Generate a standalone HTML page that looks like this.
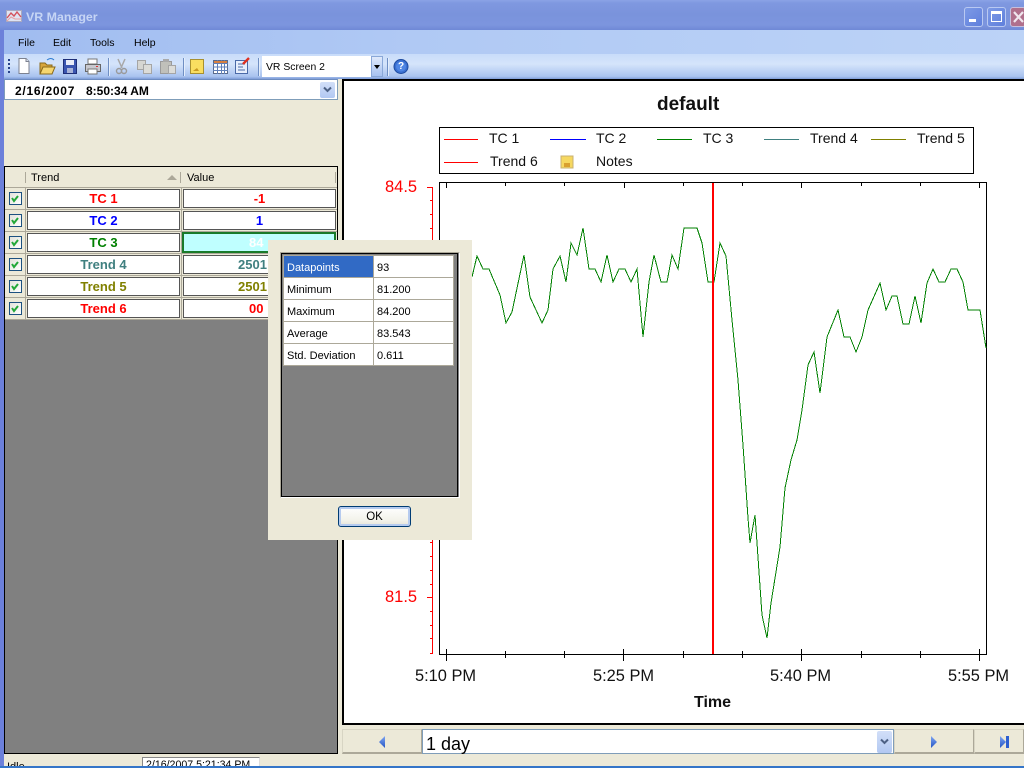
<!DOCTYPE html>
<html><head><meta charset="utf-8"><title>VR Manager</title>
<style>
html,body{margin:0;padding:0;width:1024px;height:768px;overflow:hidden;background:#ECE9D8}
*{box-sizing:border-box}
body{font-family:"Liberation Sans",sans-serif;position:relative;color:#000}
.a{position:absolute;white-space:pre}
.m{font-size:10.5px;top:37px;color:#000}
.c{position:absolute;background:#fff;border:1px solid #555;height:19px;font-weight:bold;font-size:13px;line-height:17px;text-align:center;white-space:pre}
.ck{position:absolute;left:9px;width:13px;height:13px;background:linear-gradient(135deg,#e2e2da,#fff);border:1px solid #1C5180}
.hl{position:absolute;background:#ACA899}
.dt{position:absolute;font-size:11px;line-height:24px;height:21px;overflow:hidden;padding-left:3px;white-space:pre;background:#fff}
.ax{position:absolute;font-size:16.4px;line-height:18px;color:#111;white-space:pre}
.lg{position:absolute;font-size:14px;line-height:16px;color:#111;white-space:pre}
.sep{position:absolute;top:58px;width:1px;height:18px;background:#6f8fc4;box-shadow:1px 0 0 #e4eefc}
.b{position:absolute;top:729px;height:25px;background:#ECE9D8;border:1px solid #ACA899;border-top-color:#d8d5c4;border-left-color:#d8d5c4;border-bottom:2px solid #ACA899}
</style></head><body>

<!-- title bar -->
<div class="a" style="left:0;top:0;width:1024px;height:30px;background:linear-gradient(#8ba3e6 0,#7f98e0 3px,#7a93dc 14px,#7c95de 25px,#6f88d6 30px)"></div>
<svg class="a" style="left:6px;top:9px" width="17" height="14" viewBox="0 0 17 14">
<rect x="0.5" y="1.5" width="15" height="11" fill="#dfe4f2" stroke="#a9a9c0"/>
<path d="M1 9L5 4L8 7L11 3L15 8" fill="none" stroke="#d4505a" stroke-width="1.4"/>
<path d="M1 12L5 8L9 10L15 10" fill="none" stroke="#e8a0a0"/>
</svg>
<div class="a" style="left:26px;top:10px;font-weight:bold;font-size:12.4px;line-height:15px;color:#c6d5f5">VR Manager</div>
<div class="a" style="left:964px;top:7px;width:19px;height:20px;border:1px solid #b9c9f2;border-radius:3px;background:linear-gradient(135deg,#7d9ae6,#5f7fdc)"><div class="a" style="left:4px;top:11px;width:7px;height:3px;background:#fff"></div></div>
<div class="a" style="left:987px;top:7px;width:19px;height:20px;border:1px solid #b9c9f2;border-radius:3px;background:linear-gradient(135deg,#7d9ae6,#5f7fdc)"><div class="a" style="left:3px;top:3px;width:11px;height:11px;border:1px solid #fff;border-top-width:3px"></div></div>
<div class="a" style="left:1010px;top:7px;width:16px;height:20px;border:1px solid #c7bfdc;border-radius:3px;background:#b0708c"></div>
<svg class="a" style="left:1013px;top:11px" width="11" height="12" viewBox="0 0 11 12"><path d="M1 1L10 11M10 1L1 11" stroke="#f0e6ee" stroke-width="2.2"/></svg>

<!-- menu -->
<div class="a" style="left:0;top:30px;width:1024px;height:24px;background:linear-gradient(90deg,#a0bcf0,#b0c9f4 40%,#bcd3f7)"></div>
<div class="a m" style="left:18px">File</div>
<div class="a m" style="left:53px">Edit</div>
<div class="a m" style="left:90px">Tools</div>
<div class="a m" style="left:134px">Help</div>

<!-- toolbar -->
<div class="a" style="left:0;top:54px;width:1024px;height:25px;background:linear-gradient(#c8dcfa,#d5e4fb 40%,#a9c3ef 90%,#7f9cd8)"></div>
<div class="a" style="left:8px;top:59px;width:2px;height:15px;background:repeating-linear-gradient(#27418a 0 2px,transparent 2px 4px)"></div>
<svg class="a" style="left:0;top:54px" width="420" height="25" viewBox="0 0 420 25">
<!-- new -->
<path d="M19 4.5h7l3 3v12h-10z" fill="#fff" stroke="#7d8290"/><path d="M26 4.5v3h3" fill="#dfe4ee" stroke="#7d8290"/>
<!-- open -->
<path d="M40 9h5l2 2h5v9H40z" fill="#d8a53c" stroke="#8a6a1c"/><path d="M40 20l3-7h12l-3 7z" fill="#f6d670" stroke="#8a6a1c"/><path d="M47 6q4-3 7 0" fill="none" stroke="#2a7ad0"/>
<!-- save -->
<rect x="63.5" y="5.5" width="13" height="14" fill="#3a55b0" stroke="#1e2f78"/><rect x="66" y="6" width="8" height="5" fill="#e8ecf8"/><rect x="67" y="14" width="6" height="5" fill="#a9b4d8"/>
<!-- print -->
<path d="M88 5h9v5h-9z" fill="#fff" stroke="#777"/><path d="M85.5 10.5h15v7h-15z" fill="#c9c9cf" stroke="#666"/><path d="M88 15h9v5h-9z" fill="#fff" stroke="#777"/><rect x="96" y="12" width="2" height="1" fill="#d33"/>
<!-- cut -->
<path d="M118 5l4 9M125 5l-4 9" stroke="#a8a8a8" stroke-width="1.5" fill="none"/><circle cx="119" cy="17" r="2.5" fill="none" stroke="#9a9a9a" stroke-width="1.4"/><circle cx="124" cy="17" r="2.5" fill="none" stroke="#9a9a9a" stroke-width="1.4"/>
<!-- copy -->
<rect x="137.5" y="6.5" width="8" height="9" fill="#d6d6d2" stroke="#a5a5a5"/><rect x="143.5" y="10.5" width="8" height="9" fill="#dcdcd8" stroke="#a5a5a5"/>
<!-- paste -->
<rect x="160.5" y="7.5" width="11" height="12" fill="#c0c0ba" stroke="#9a9a9a"/><rect x="163" y="5" width="6" height="3" fill="#aaa"/><rect x="168.5" y="11.5" width="7" height="8" fill="#dcdcd8" stroke="#a5a5a5"/>
<!-- note -->
<rect x="190.5" y="5.5" width="13" height="14" fill="#f9de60" stroke="#a89030"/><path d="M193 17l4-3 2 3z" fill="#c89a20"/>
<!-- grid -->
<rect x="213.5" y="6.5" width="14" height="13" fill="#fff" stroke="#5a6a8a"/><path d="M213 9.5h15M213 13h15M213 16.5h15M217.500 6v14M221.500 6v14M224.500 6v14" stroke="#5f7fb8" stroke-width="1"/><rect x="214" y="7" width="13" height="2" fill="#d88040"/>
<!-- edit -->
<rect x="235.500" y="6.500" width="12" height="13" fill="#e6eefc" stroke="#4a6aa8"/><path d="M238 10h7M238 13h5M238 16h7" stroke="#4a6aa8"/><path d="M243 10l6-6" stroke="#e03020" stroke-width="2.4"/>
<!-- help -->
<circle cx="401" cy="12.500" r="7" fill="#3a6fd0" stroke="#1c4aa0"/><circle cx="401" cy="12.500" r="5" fill="#4f86e4"/>
</svg>
<div class="a" style="left:400px;top:60px;font-weight:bold;font-size:10px;line-height:13px;color:#fff;transform:translateX(-2px)">?</div>
<div class="sep" style="left:108px"></div><div class="sep" style="left:183px"></div><div class="sep" style="left:258px"></div><div class="sep" style="left:387px"></div>
<div class="a" style="left:262px;top:56px;width:121px;height:21px;background:#fff"></div>
<div class="a" style="left:266px;top:61px;font-size:10.4px;line-height:14px">VR Screen 2</div>
<div class="a" style="left:371px;top:56px;width:12px;height:21px;background:linear-gradient(#dfe9fb,#a8c2f0);border:1px solid #8aa8d8"></div>
<div class="a" style="left:374px;top:65px;width:0;height:0;border:3px solid transparent;border-top:4px solid #000;border-bottom:0"></div>

<!-- left border -->
<div class="a" style="left:0;top:30px;width:4px;height:736px;background:#6c80da"></div>

<!-- date combo -->
<div class="a" style="left:4px;top:79px;width:334px;height:21px;background:#fff;border:1px solid #7F9DB9;border-top:1px solid #6d8cc0"></div>
<div class="a" style="left:15px;top:84px;font-weight:bold;font-size:12px;line-height:14px;letter-spacing:.75px">2/16/2007</div>
<div class="a" style="left:86px;top:84px;font-weight:bold;font-size:12px;line-height:14px">8:50:34 AM</div>
<div class="a" style="left:320px;top:82px;width:15px;height:16px;border-radius:2px;background:linear-gradient(#d2dff8,#b2c8f2)"></div>
<svg class="a" style="left:322px;top:86px" width="11" height="8" viewBox="0 0 11 8"><path d="M2 1.500L5.500 5L9 1.500" fill="none" stroke="#4d6185" stroke-width="2"/></svg>

<!-- grid -->
<div class="a" style="left:4px;top:166px;width:334px;height:588px;background:#808080;border:1px solid #000"></div>
<div class="a" style="left:5px;top:167px;width:332px;height:152px;background:#ECE9D8"></div>
<div class="a" style="left:5px;top:187px;width:332px;height:1px;background:#ACA899"></div>
<div class="a" style="left:25px;top:172px;width:1px;height:11px;background:#ACA899"></div>
<div class="a" style="left:180px;top:172px;width:1px;height:11px;background:#ACA899"></div>
<div class="a" style="left:335px;top:172px;width:1px;height:11px;background:#ACA899"></div>
<div class="a" style="left:31px;top:171px;font-size:11px;line-height:14px">Trend</div>
<div class="a" style="left:187px;top:171px;font-size:11px;line-height:14px">Value</div>
<div class="a" style="left:167px;top:175px;width:0;height:0;border:5px solid transparent;border-bottom:5px solid #ACA899;border-top:0"></div>
<div class="hl" style="left:5px;top:209px;width:332px;height:1px"></div>
<div class="hl" style="left:5px;top:231px;width:332px;height:1px"></div>
<div class="hl" style="left:5px;top:253px;width:332px;height:1px"></div>
<div class="hl" style="left:5px;top:275px;width:332px;height:1px"></div>
<div class="hl" style="left:5px;top:297px;width:332px;height:1px"></div>
<div class="hl" style="left:5px;top:319px;width:332px;height:1px"></div>
<div class="hl" style="left:25px;top:188px;width:1px;height:131px"></div>
<div class="hl" style="left:181px;top:188px;width:1px;height:131px"></div>

<div class="c" style="left:27px;top:189px;width:153px;color:#f00">TC 1</div>
<div class="c" style="left:183px;top:189px;width:153px;color:#f00">-1</div>
<div class="c" style="left:27px;top:211px;width:153px;color:#00f">TC 2</div>
<div class="c" style="left:183px;top:211px;width:153px;color:#00f">1</div>
<div class="c" style="left:27px;top:233px;width:153px;color:#008000">TC 3</div>
<div class="c" style="left:182px;top:232px;width:154px;height:21px;background:#BFFFFF;border:2px solid #1a7a2a;color:#fff;text-align:left;padding-left:65px">84</div>
<div class="c" style="left:27px;top:255px;width:153px;color:#408080">Trend 4</div>
<div class="c" style="left:183px;top:255px;width:153px;color:#408080;text-align:left;padding-left:54px">2501</div>
<div class="c" style="left:27px;top:277px;width:153px;color:#808000">Trend 5</div>
<div class="c" style="left:183px;top:277px;width:153px;color:#808000;text-align:left;padding-left:54px">2501</div>
<div class="c" style="left:27px;top:299px;width:153px;color:#f00">Trend 6</div>
<div class="c" style="left:183px;top:299px;width:153px;color:#f00;text-align:left;padding-left:65px">00</div>

<div class="ck" style="top:192px"></div><div class="ck" style="top:214px"></div><div class="ck" style="top:236px"></div><div class="ck" style="top:258px"></div><div class="ck" style="top:280px"></div><div class="ck" style="top:302px"></div>
<svg class="a" style="left:0;top:0" width="30" height="320" viewBox="0 0 30 320">
<g fill="none" stroke="#22a838" stroke-width="2">
<path d="M12 198l2 3l4-5"/><path d="M12 220l2 3l4-5"/><path d="M12 242l2 3l4-5"/><path d="M12 264l2 3l4-5"/><path d="M12 286l2 3l4-5"/><path d="M12 308l2 3l4-5"/>
</g></svg>

<!-- chart panel -->
<div class="a" style="left:342px;top:79px;width:690px;height:646px;background:#fff;border:2px solid #000"></div>
<div class="a" style="left:657px;top:94px;font-weight:bold;font-size:19px;line-height:22px;color:#111">default</div>

<svg class="a" style="left:0;top:0" width="1024" height="768" viewBox="0 0 1024 768" shape-rendering="crispEdges">
<rect x="439.500" y="127.500" width="534" height="46" fill="#fff" stroke="#000"/>
<path d="M444 139.500h34M444 162.500h34" stroke="#f00"/><path d="M550 139.500h36" stroke="#00f"/><path d="M657 139.500h35" stroke="#008000"/><path d="M764 139.500h35" stroke="#408080"/><path d="M871 139.500h35" stroke="#808000"/>
<rect x="561" y="156" width="12" height="12" fill="#f6d860" stroke="#c8b070"/><rect x="564" y="163" width="6" height="4" fill="#d9a030"/>
<rect x="439.500" y="182.500" width="547" height="472" fill="#fff" stroke="#000"/>
<path d="M446.500 183v5M505.500 183v3M564.500 183v3M624.500 183v5M683.500 183v3M742.500 183v3M801.500 183v5M861.500 183v3M920.500 183v3M979.500 183v5" stroke="#000"/>
<path d="M446.500 649v12M623.500 649v12M801.500 649v12M979.500 649v12M505.500 651v7M564.500 651v7M683.500 651v7M742.500 651v7M861.500 651v7M920.500 651v7" stroke="#000"/>
<path d="M432.500 187v466" stroke="#f00"/>
<path d="M427 187.500h6M430 200.500h3M430 214.500h3M430 228.500h3M430 542.500h3M430 556.500h3M430 570.500h3M430 584.500h3M427 597.500h6M430 611.500h3M430 625.500h3M430 638.500h3M430 653.500h3" stroke="#f00"/>
<polyline fill="none" stroke="#008000" stroke-width="1" shape-rendering="crispEdges" points="472,277 477,256 483,269 489,269 500,295 506,323 512,312 524,255 530,297 542,323 548,310 553,269 560,256 566,282 571,243 577,255 583,228 589,269 595,269 601,282 607,255 613,282 619,269 625,269 631,282 637,269 643,337 649,282 654,255 661,282 667,282 672,255 678,269 684,228 697,228 702,243 708,282 714,282 720,243 726,256 732,320 738,380 743,445 748,518 750,543 755,515 757,543 762,615 767,638 771,603 780,547 785,488 791,460 797,440 802,410 808,365 814,352 820,393 827,337 838,310 844,337 850,337 856,352 862,337 868,310 880,283 886,310 892,296 897,296 903,324 909,324 915,296 921,323 927,283 933,269 939,282 945,282 951,269 957,269 963,282 968,310 980,310 986,348"/>
<rect x="712" y="183" width="2" height="471" fill="#f00"/>
</svg>

<div class="lg" style="left:489px;top:130px">TC 1</div>
<div class="lg" style="left:596px;top:130px">TC 2</div>
<div class="lg" style="left:703px;top:130px">TC 3</div>
<div class="lg" style="left:810px;top:130px">Trend 4</div>
<div class="lg" style="left:917px;top:130px">Trend 5</div>
<div class="lg" style="left:490px;top:153px">Trend 6</div>
<div class="lg" style="left:596px;top:153px">Notes</div>

<div class="ax" style="left:385px;top:178px;color:#f00;font-size:16.500px">84.5</div>
<div class="ax" style="left:385px;top:588px;color:#f00;font-size:16.500px">81.5</div>
<div class="ax" style="left:415px;top:667px">5:10 PM</div>
<div class="ax" style="left:593px;top:667px">5:25 PM</div>
<div class="ax" style="left:770px;top:667px">5:40 PM</div>
<div class="ax" style="left:948px;top:667px">5:55 PM</div>
<div class="ax" style="left:694px;top:694px;font-weight:bold;font-size:16px">Time</div>

<!-- bottom controls -->
<div class="b" style="left:342px;width:80px"></div>
<div class="b" style="left:894px;width:80px"></div>
<div class="b" style="left:974px;width:50px"></div>
<div class="a" style="left:422px;top:729px;width:472px;height:25px;background:#fff;border:1px solid #7F9DB9"></div>
<div class="a" style="left:426px;top:734px;font-size:18px;line-height:21px">1 day</div>
<div class="a" style="left:877px;top:731px;width:15px;height:22px;border-radius:2px;background:linear-gradient(#d2dff8,#b2c8f2)"></div>
<svg class="a" style="left:879px;top:738px" width="11" height="8" viewBox="0 0 11 8"><path d="M2 1.500L5.500 5L9 1.500" fill="none" stroke="#4d6185" stroke-width="2"/></svg>
<svg class="a" style="left:0;top:730px" width="1024" height="24" viewBox="0 0 1024 24">
<defs><linearGradient id="g" x1="0" x2="0" y1="0" y2="1"><stop offset="0" stop-color="#7fa6f2"/><stop offset="1" stop-color="#2455c4"/></linearGradient></defs>
<path d="M385 6v12l-6-6z" fill="url(#g)"/>
<path d="M931 6v12l6-6z" fill="url(#g)"/>
<path d="M1000 6v12l6-6z" fill="url(#g)"/><rect x="1006" y="6" width="3" height="12" fill="#2d5fd0"/>
</svg>

<!-- status bar -->
<div class="a" style="left:7px;top:760px;font-size:11px;line-height:14px">Idle</div>
<div class="a" style="left:142px;top:757px;width:118px;height:12px;background:#fff;border:1px solid #888;border-right-color:#ddd;border-bottom:0;font-size:10.600px;line-height:14px;padding-left:3px;overflow:hidden">2/16/2007 5:21:34 PM</div>
<div class="a" style="left:0;top:766px;width:1024px;height:2px;background:#3475c8"></div>

<!-- dialog -->
<div class="a" style="left:268px;top:240px;width:204px;height:300px;background:#ECE9D8"></div>
<div class="a" style="left:280px;top:252px;width:180px;height:246px;background:#808080;border:1px solid #fff;border-top-color:#ACA899;border-left-color:#ACA899"></div>
<div class="a" style="left:281px;top:253px;width:177px;height:244px;background:#808080;border:1px solid #000"></div>
<div class="a" style="left:283px;top:255px;width:171px;height:111px;background:#ACA899"></div>
<div class="dt" style="left:284px;top:256px;width:89px;background:#316AC5;color:#fff">Datapoints</div><div class="dt" style="left:374px;top:256px;width:79px">93</div>
<div class="dt" style="left:284px;top:278px;width:89px">Minimum</div><div class="dt" style="left:374px;top:278px;width:79px">81.200</div>
<div class="dt" style="left:284px;top:300px;width:89px">Maximum</div><div class="dt" style="left:374px;top:300px;width:79px">84.200</div>
<div class="dt" style="left:284px;top:322px;width:89px">Average</div><div class="dt" style="left:374px;top:322px;width:79px">83.543</div>
<div class="dt" style="left:284px;top:344px;width:89px">Std. Deviation</div><div class="dt" style="left:374px;top:344px;width:79px">0.611</div>
<div class="a" style="left:338px;top:506px;width:73px;height:21px;border:1px solid #003C74;border-radius:3px;background:linear-gradient(#fff,#f2f2ea 70%,#e6e4d8);box-shadow:inset 0 0 0 2px #b6cbef;font-size:11.500px;line-height:21px;text-align:center">OK</div>

</body></html>
